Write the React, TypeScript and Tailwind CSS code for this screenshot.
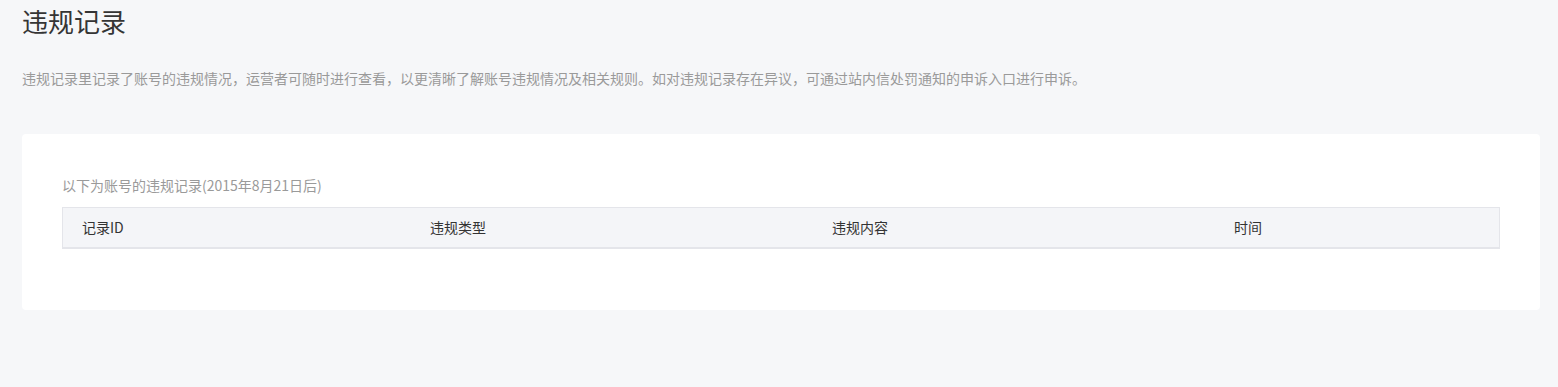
const columns = [
  { label: '记录ID', width: 'w-[348px]' },
  { label: '违规类型', width: 'w-[402px]' },
  { label: '违规内容', width: 'w-[402px]' },
  { label: '时间', width: 'flex-1' },
];

export default function App() {
  return (
    <div
      className="min-h-[387px] bg-[#f6f7f9] pl-[22px] pr-[18px] pb-[77px]"
      style={{ fontFamily: '"Noto Sans CJK SC", "Noto Sans", sans-serif' }}
    >
      <h1 className="pt-[3px] text-[26px] leading-[36px] font-normal text-[#353535]">违规记录</h1>
      <p className="mt-[28px] text-[14px] leading-[22px] text-[#9a9a9a]">
        违规记录里记录了账号的违规情况，运营者可随时进行查看，以更清晰了解账号违规情况及相关规则。如对违规记录存在异议，可通过站内信处罚通知的申诉入口进行申诉。
      </p>
      <div className="mt-[45px] rounded-[4px] bg-white px-[40px] pt-[40px] pb-[61px]">
        <div className="text-[14px] leading-[22px] text-[#9a9a9a]">以下为账号的违规记录(2015年8月21日后)</div>
        <div className="mt-[11px] flex h-[42px] items-center border border-b-2 border-[#e4e5ea] bg-[#f4f5f8]">
          {columns.map((col) => (
            <div key={col.label} className={`${col.width} pl-[19px] text-[14px] text-[#333333]`}>
              {col.label}
            </div>
          ))}
        </div>
      </div>
    </div>
  );
}
